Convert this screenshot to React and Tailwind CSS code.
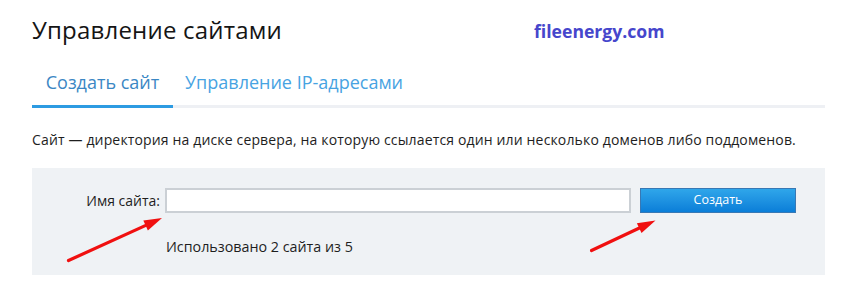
import React from "react";

function Arrow({ x1, y1, x2, y2 }) {
  const dx = x2 - x1;
  const dy = y2 - y1;
  const len = Math.hypot(dx, dy);
  const ux = dx / len;
  const uy = dy / len;
  const hl = 18;
  const hw = 5.5;
  const bx = x2 - ux * hl;
  const by = y2 - uy * hl;
  const px = -uy;
  const py = ux;
  const pts = `${x2},${y2} ${bx + px * hw},${by + py * hw} ${bx - px * hw},${by - py * hw}`;
  return (
    <g>
      <line x1={x1} y1={y1} x2={bx + ux * 2} y2={by + uy * 2} stroke="#f01010" strokeWidth="3.2" strokeLinecap="round" />
      <polygon points={pts} fill="#f01010" />
    </g>
  );
}

export default function App() {
  return (
    <div className="relative w-[856px] h-[297px] bg-white overflow-hidden font-['Open_Sans',sans-serif] text-[#1e1e1e]">
      <div className="pl-[32px] pr-[31px] pt-[12px]">
        <div className="flex items-center h-[36px]">
          <h1 className="text-[24px] leading-[36px] font-normal text-[#151515] tracking-[0.2px]">Управление сайтами</h1>
          <div className="ml-[252px] mt-[2px] text-[17.6px] font-bold text-[#4646cc]">fileenergy.com</div>
        </div>
        <div className="mt-[20px] flex border-b-[3px] border-[#eef0f4] h-[40px]">
          <div className="w-[141px] flex justify-center text-[18px] leading-[26px] text-[#3b87c4] border-b-[3px] border-[#2d9be2] mb-[-3px] pt-[1px]">
            Создать сайт
          </div>
          <div className="ml-[12px] text-[18px] leading-[26px] text-[#47a3e2] pt-[1px]">Управление IP-адресами</div>
        </div>
        <p className="mt-[22px] text-[14px] leading-[20px] tracking-[0.15px] text-[#1e1e1e]">
          Сайт — директория на диске сервера, на которую ссылается один или несколько доменов либо поддоменов.
        </p>
        <div className="mt-[18px] bg-[#eff2f5] h-[107px] pt-[20px]">
          <div className="flex items-center h-[25px]">
            <label className="w-[133px] text-right text-[14px] text-[#1e1e1e] pr-[5px]">Имя сайта:</label>
            <div className="w-[466px] h-[25px] bg-white border-2 border-[#cbd0d5]"></div>
            <button className="ml-[9px] w-[156px] h-[25px] border border-[#3878b4] bg-gradient-to-b from-[#2fa6ea] to-[#0a7ed8] text-white text-[12.5px] flex items-center justify-center">
              Создать
            </button>
          </div>
          <div className="mt-[24px] ml-[134px] text-[14.3px] leading-[20px] text-[#1e1e1e]">Использовано 2 сайта из 5</div>
        </div>
      </div>
      <svg className="absolute inset-0 pointer-events-none" width="856" height="297" viewBox="0 0 856 297">
        <Arrow x1={68.5} y1={260.5} x2={162} y2={218} />
        <Arrow x1={591.5} y1={250.5} x2={655.5} y2={220.5} />
      </svg>
    </div>
  );
}
